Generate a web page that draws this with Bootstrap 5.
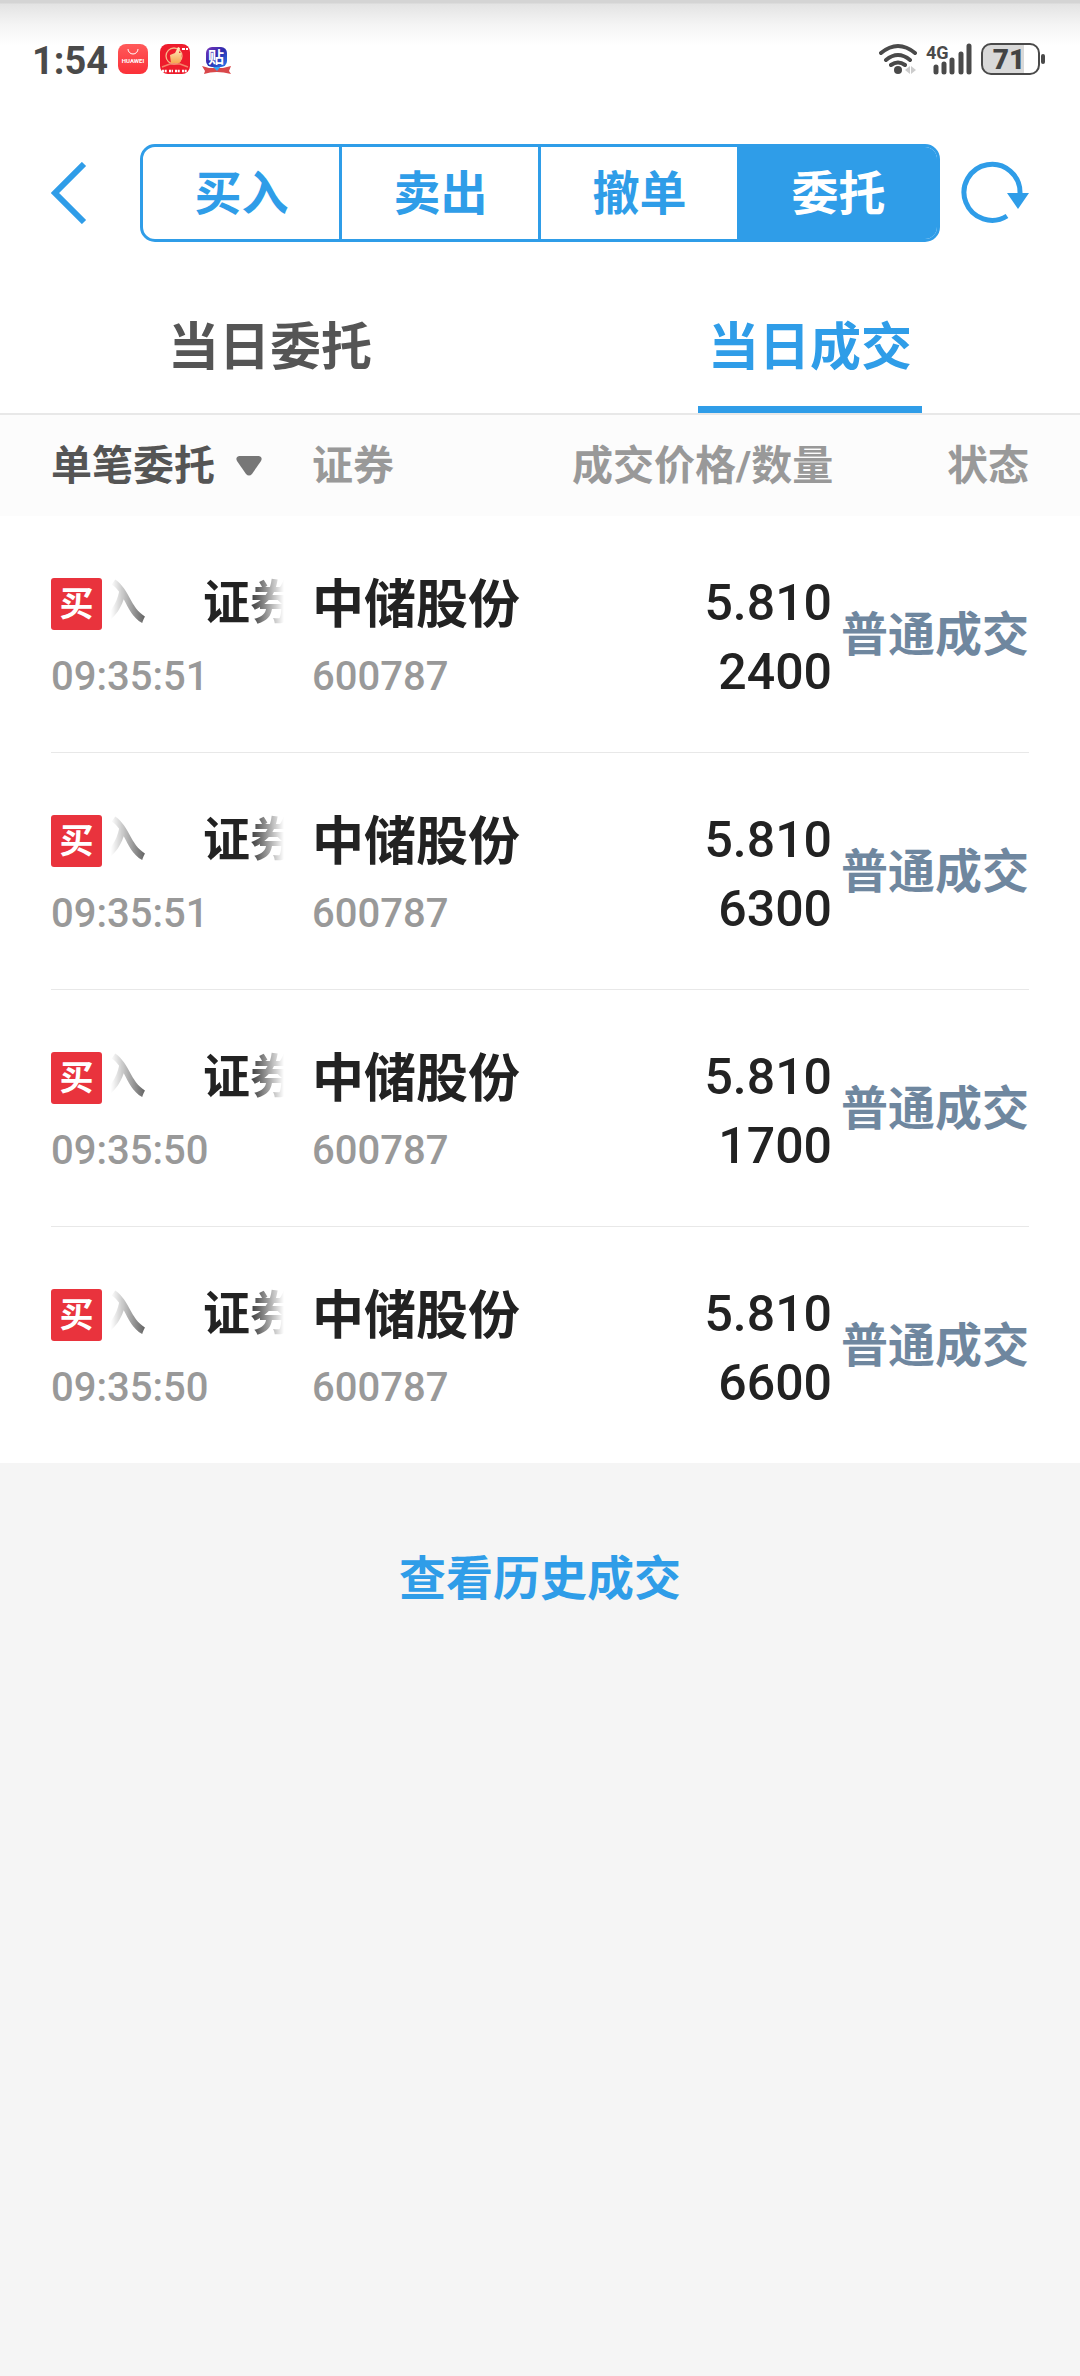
<!DOCTYPE html>
<html lang="zh-CN">
<head>
<meta charset="utf-8">
<meta name="viewport" content="width=device-width, initial-scale=1">
<title>当日成交</title>
<link rel="stylesheet" href="https://cdn.jsdelivr.net/npm/bootstrap@5.3.0/dist/css/bootstrap.min.css">
<style>
:root { --brand: #2f9de8; --ink: #222; --side: 51px; }
body { background: #f5f5f5; color: var(--ink); font-family: Roboto, "Noto Sans CJK SC", sans-serif; }
svg { display: block; }
.top-area { background: #fff linear-gradient(#d4d4d4 0, #d4d4d4 3px, #e3e3e3 4px, #f4f4f4 24px, #fff 46px) no-repeat; }
.status-bar { height: 144px; padding: 40px 33px 0 32px; color: #4a4a4a; }
.clock { font-size: 38px; line-height: 42px; font-weight: 700; }
.app-icons { margin-left: 10px; }
.tool-bar { padding: 0 var(--side); }
.tool-btn { width: 89px; }
.seg { border: 3px solid var(--brand); border-radius: 15px; overflow: hidden; }
.seg .btn { font-size: 47px; line-height: 48px; font-weight: 700; padding: 23px 0 21px; color: var(--brand); border: 0; border-radius: 0; flex: 1 1 0; }
.seg .btn + .btn { border-left: 3px solid var(--brand); }
.seg .btn.active { background: var(--brand); color: #fff; }
.tab-row { padding-top: 48px; border-bottom: 2px solid #e8e8e8; }
.tab-row .nav-link { padding: 0; color: #555; font-size: 51px; line-height: 116px; font-weight: 700; }
.tab-row .nav-link span { display: inline-block; width: 224px; border-bottom: 7px solid transparent; vertical-align: top; }
.tab-row .nav-link.active { color: var(--brand); }
.tab-row .nav-link.active span { border-color: var(--brand); }
.deals { background: #fff; padding: 0 var(--side); }
.deals .table { table-layout: fixed; --bs-table-bg: #fff; --bs-table-color: var(--ink); border-color: #e8e8e8; }
.deals thead tr { box-shadow: calc(0px - var(--side)) 0 #fcfcfc, var(--side) 0 #fcfcfc; }
.deals th { background: #fcfcfc; box-shadow: none; border: 0; padding: 21px 0 20px; font-size: 41px; line-height: 60px; font-weight: 700; color: #999; white-space: nowrap; }
.deals th .btn { font-size: 41px; line-height: 60px; font-weight: 700; color: #555; border: 0; padding: 0; gap: 21px; }
.deals td { padding: 62px 0 54px; border-bottom-width: 1px; }
.deals tbody tr:last-child td { border-bottom-width: 0; }
.col-kind { width: 261px; }
.col-state { width: 197px; }
.line-top { height: 52px; margin-bottom: 26px; }
.side-tag { width: 51px; height: 52px; border-radius: 3px; background: #e9333d; color: #fff; font-size: 34px; line-height: 52px; font-weight: 700; text-align: center; flex: none; }
.ticker { width: 173px; margin-left: 9px; overflow: hidden; white-space: nowrap; font-size: 47px; line-height: 50px; font-weight: 700; align-self: flex-start; -webkit-mask-image: linear-gradient(90deg, transparent, #000 48px, #000 136px, transparent); mask-image: linear-gradient(90deg, transparent, #000 48px, #000 136px, transparent); }
.ticker-track { margin-left: -12px; gap: 57px; }
.stock { font-size: 52px; line-height: 56px; font-weight: 700; white-space: nowrap; }
.minor { font-size: 40px; line-height: 42px; font-weight: 500; color: #999; }
.deals td.figures { font-size: 50px; line-height: 69px; font-weight: 500; padding-top: 53px; padding-bottom: 0; }
.deals td.state { font-size: 47px; line-height: 60px; font-weight: 700; color: #6f879f; padding-top: 89px; padding-bottom: 0; white-space: nowrap; }
.history { padding: 81px 0; font-size: 47px; line-height: 70px; font-weight: 700; }
.history a { color: var(--brand); }
</style>
</head>
<body>
<header class="top-area">
  <div class="status-bar d-flex justify-content-between align-items-start">
    <div class="d-flex align-items-start">
      <span class="clock">1:54</span>
      <svg class="app-icons" width="116" height="34" viewBox="0 0 116 34" aria-hidden="true">
        <defs>
          <linearGradient id="g1" x2="0" y2="1"><stop stop-color="#ff5a5a"/><stop offset="1" stop-color="#fb3038"/></linearGradient>
          <linearGradient id="g2" x2="0" y2="1"><stop stop-color="#fff0c8"/><stop offset="1" stop-color="#f6a550"/></linearGradient>
          <linearGradient id="g3" x2="1" y2="1"><stop stop-color="#7b35b8"/><stop offset=".5" stop-color="#2b2cae"/><stop offset="1" stop-color="#2b7ef0"/></linearGradient>
        </defs>
        <rect x="0" y="4" width="30" height="30" rx="8" fill="url(#g1)"/>
        <path d="M10 9a5 5 0 0 0 10 0" fill="none" stroke="#fff" stroke-width="1"/>
        <text x="15" y="23" text-anchor="middle" font-size="6" font-weight="700" fill="#fff">HUAWEI</text>
        <rect x="42" y="4" width="30" height="30" rx="8" fill="#ee1c2c"/>
        <circle cx="56" cy="16" r="8" fill="none" stroke="#f7b98a" stroke-width="1.3"/>
        <path d="M52 15l5-2 3-6 2 1-1 5h2v8l-2 2h-8z" fill="url(#g2)"/>
        <path d="M44 27l8-3h10l8 3" fill="none" stroke="#f4846a" stroke-width="1.6"/>
        <path d="M44 31h5m2 0h4m2 0h5m2 0h5" stroke="#fff" stroke-width="2.4" stroke-dasharray="2 .7"/>
        <path d="M64 9h3m1 0h2" stroke="#fff" stroke-width="2"/>
        <path d="M84 26l7 2h14l8-2-2 5 2 3q-15-4-27 0l1-3z" fill="#d9474a"/>
        <path d="M92 24h13l-6 7z" fill="#35a5f2"/>
        <rect x="88" y="7" width="21" height="20" rx="6" fill="url(#g3)"/>
        <text x="98" y="23" text-anchor="middle" font-size="16" font-weight="700" fill="#fff">贴</text>
      </svg>
    </div>
    <svg width="168" height="36" viewBox="0 0 168 36" aria-hidden="true">
      <g fill="none" stroke="#4a4a4a" stroke-width="4" stroke-linecap="round">
        <path d="M2 13q17-14 34 0M7 20q12-10 24 0M12 25q7-5 14 0" />
      </g>
      <circle cx="19" cy="30" r="4" fill="#4a4a4a"/>
      <path d="M26 30l5-4v8zM37 30l-5-4v8z" fill="#ccc"/>
      <text x="47" y="19" font-size="18" font-weight="700" fill="#4a4a4a">4G</text>
      <path d="M57 27v5M65 24v8M73 20v12M82 14v18M90 6v26" stroke="#4a4a4a" stroke-width="5" stroke-linecap="round"/>
      <path d="M112 4h33v30h-33a8 8 0 0 1-8-8v-14a8 8 0 0 1 8-8z" fill="#d9d9d9"/>
      <rect x="103" y="4" width="57" height="30" rx="9" fill="none" stroke="#4a4a4a" stroke-width="2"/>
      <rect x="162" y="14" width="4" height="10" rx="2" fill="#4a4a4a"/>
      <text x="130" y="29" text-anchor="middle" font-size="28" font-weight="900" fill="#444">71</text>
    </svg>
  </div>
  <div class="tool-bar d-flex align-items-center">
    <button type="button" class="tool-btn btn border-0 p-0" aria-label="返回">
      <svg width="36" height="62" viewBox="0 0 36 62" fill="none" stroke="#2f9de8" stroke-width="6"><path d="M33 2L4 31l29 29"/></svg>
    </button>
    <div class="seg btn-group flex-grow-1" role="group" aria-label="交易">
      <button type="button" class="btn">买入</button>
      <button type="button" class="btn">卖出</button>
      <button type="button" class="btn">撤单</button>
      <button type="button" class="btn active">委托</button>
    </div>
    <button type="button" class="tool-btn btn border-0 p-0 d-flex justify-content-end" aria-label="刷新">
      <svg width="68" height="64" viewBox="0 0 68 64"><path d="M59 32A28 28 0 1 0 46 55" fill="none" stroke="#2f9de8" stroke-width="5"/><path d="M46 32h22L57 48z" fill="#2f9de8"/></svg>
    </button>
  </div>
  <nav class="tab-row nav nav-justified">
    <a class="nav-link" href="#orders"><span>当日委托</span></a>
    <a class="nav-link active" href="#deals" aria-current="page"><span>当日成交</span></a>
  </nav>
</header>
<main>
  <section class="deals" id="deals">
    <table class="table mb-0">
      <colgroup><col class="col-kind"><col><col><col class="col-state"></colgroup>
      <thead>
        <tr>
          <th scope="col"><button type="button" class="btn d-flex align-items-center">单笔委托<svg width="26" height="20" viewBox="0 0 26 20"><path d="M3 0h20q4 1 2 5L16 18q-3 3-6 0L1 5Q-1 1 3 0z" fill="#777"/></svg></button></th>
          <th scope="col">证券</th>
          <th scope="col" class="text-end">成交价格/数量</th>
          <th scope="col" class="text-end">状态</th>
        </tr>
      </thead>
      <tbody>
        <tr>
          <td><div class="line-top d-flex align-items-center"><span class="side-tag">买</span><div class="ticker"><div class="ticker-track d-flex"><span>入</span><span>证券</span></div></div></div><div class="minor">09:35:51</div></td>
          <td><div class="line-top stock">中储股份</div><div class="minor">600787</div></td>
          <td class="figures text-end">5.810<br>2400</td>
          <td class="state text-end">普通成交</td>
        </tr>
        <tr>
          <td><div class="line-top d-flex align-items-center"><span class="side-tag">买</span><div class="ticker"><div class="ticker-track d-flex"><span>入</span><span>证券</span></div></div></div><div class="minor">09:35:51</div></td>
          <td><div class="line-top stock">中储股份</div><div class="minor">600787</div></td>
          <td class="figures text-end">5.810<br>6300</td>
          <td class="state text-end">普通成交</td>
        </tr>
        <tr>
          <td><div class="line-top d-flex align-items-center"><span class="side-tag">买</span><div class="ticker"><div class="ticker-track d-flex"><span>入</span><span>证券</span></div></div></div><div class="minor">09:35:50</div></td>
          <td><div class="line-top stock">中储股份</div><div class="minor">600787</div></td>
          <td class="figures text-end">5.810<br>1700</td>
          <td class="state text-end">普通成交</td>
        </tr>
        <tr>
          <td><div class="line-top d-flex align-items-center"><span class="side-tag">买</span><div class="ticker"><div class="ticker-track d-flex"><span>入</span><span>证券</span></div></div></div><div class="minor">09:35:50</div></td>
          <td><div class="line-top stock">中储股份</div><div class="minor">600787</div></td>
          <td class="figures text-end">5.810<br>6600</td>
          <td class="state text-end">普通成交</td>
        </tr>
      </tbody>
    </table>
  </section>
  <div class="history text-center"><a class="text-decoration-none" href="#history">查看历史成交</a></div>
</main>
<script src="https://cdn.jsdelivr.net/npm/bootstrap@5.3.0/dist/js/bootstrap.bundle.min.js"></script>
</body>
</html>
